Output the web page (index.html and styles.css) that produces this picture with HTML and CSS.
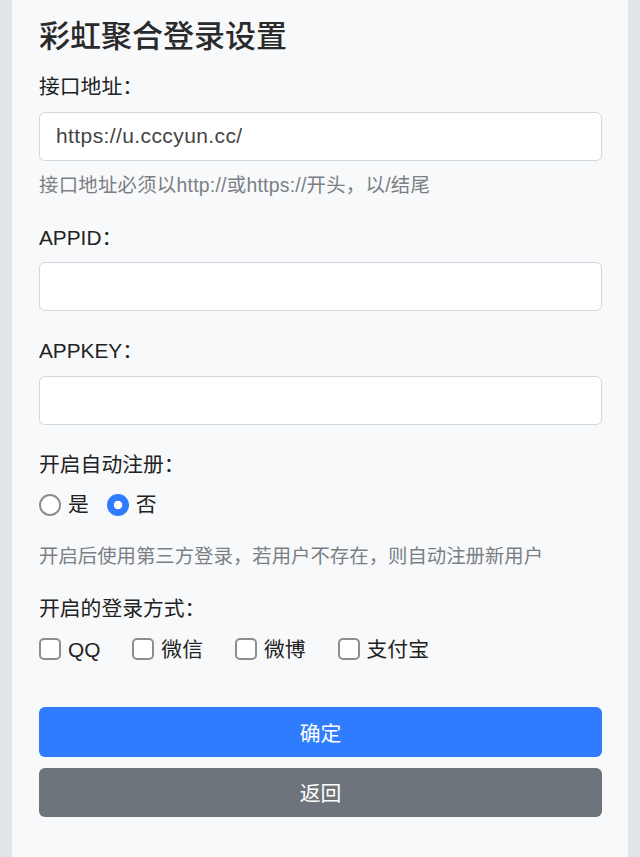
FILE: index.html
```html
<!DOCTYPE html>
<html lang="zh-CN">
<head>
<meta charset="utf-8">
<title>彩虹聚合登录设置</title>
<link rel="stylesheet" href="styles.css">
</head>
<body>
<div class="card">
  <h1 class="title">彩虹聚合登录设置</h1>
  <div class="field">
    <label class="lbl">接口地址：</label>
    <input class="ctl" type="text" value="https://u.cccyun.cc/">
    <p class="help help-url">接口地址必须以http://或https://开头，以/结尾</p>
  </div>
  <div class="field">
    <label class="lbl">APPID：</label>
    <input class="ctl" type="text">
  </div>
  <div class="field">
    <label class="lbl">APPKEY：</label>
    <input class="ctl" type="text">
  </div>
  <div class="field">
    <label class="lbl">开启自动注册：</label>
    <div class="row radios">
      <label class="opt"><input type="radio" name="reg" class="radio"><span>是</span></label>
      <label class="opt"><input type="radio" name="reg" class="radio" checked><span>否</span></label>
    </div>
    <p class="help help-wide">开启后使用第三方登录，若用户不存在，则自动注册新用户</p>
  </div>
  <div class="field">
    <label class="lbl">开启的登录方式：</label>
    <div class="row checks">
      <label class="opt"><input type="checkbox" class="check"><span>QQ</span></label>
      <label class="opt"><input type="checkbox" class="check"><span>微信</span></label>
      <label class="opt"><input type="checkbox" class="check"><span>微博</span></label>
      <label class="opt"><input type="checkbox" class="check"><span>支付宝</span></label>
    </div>
  </div>
  <div class="actions">
    <button class="btn btn-primary" type="button">确定</button>
    <button class="btn btn-secondary" type="button">返回</button>
  </div>
</div>
</body>
</html>
```
FILE: styles.css
```css
html, body {
  margin: 0;
  padding: 0;
}
body {
  background: #e1e4e9;
  font-family: "Liberation Sans", "Noto Sans CJK SC", sans-serif;
  color: #212529;
  font-size: 20.8px;
}
.card {
  margin: 0 12px;
  background: #f8f9fa;
  padding: 18px 26px 40px 27px;
  min-height: 100vh;
  box-sizing: border-box;
}
.title {
  margin: 0 0 16px;
  font-size: 31px;
  line-height: 37px;
  font-weight: 500;
  color: #2a2a2a;
}
.field {
  margin-bottom: 24px;
}
.lbl {
  display: block;
  line-height: 31px;
  margin-bottom: 9.5px;
  color: #222;
}
.ctl {
  display: block;
  width: 100%;
  height: 49px;
  box-sizing: border-box;
  border: 1.5px solid #d3d6da;
  border-radius: 6px;
  background: #fff;
  padding: 0 16px;
  font-family: inherit;
  font-size: 21px;
  letter-spacing: 0.4px;
  color: #444;
  margin: 0;
}
.help {
  margin: 12px 0 2px;
  font-size: 19.4px;
  line-height: 25px;
  color: #7a7f85;
}
.help-url {
  letter-spacing: 0.25px;
}
.help-wide {
  margin-top: 24px;
  margin-bottom: 0;
}
.row {
  display: flex;
  align-items: center;
  height: 31px;
}
.radios {
  gap: 18px;
}
.checks {
  gap: 32px;
}
.opt {
  display: flex;
  align-items: center;
  gap: 7px;
  line-height: 31px;
  color: #222;
}
.radio, .check {
  appearance: none;
  -webkit-appearance: none;
  margin: 0;
  width: 22px;
  height: 22px;
  box-sizing: border-box;
  border: 2px solid #8e8e8e;
  background: #fff;
  flex: none;
}
.radio {
  border-radius: 50%;
}
.radio:checked {
  border-color: #2f7dfe;
  background: radial-gradient(circle, #fff 0 3.8px, #2f7dfe 4.6px);
}
.check {
  border-radius: 5px;
}
.actions {
  margin-top: 42.5px;
  display: flex;
  flex-direction: column;
  gap: 11px;
}
.btn {
  display: block;
  width: 100%;
  height: 49.5px;
  border: none;
  border-radius: 6px;
  font-family: inherit;
  font-size: 20.8px;
  color: #fff;
  padding: 0;
}
.btn-primary {
  background: #2f7dfe;
}
.btn-secondary {
  background: #6e747b;
}
```
